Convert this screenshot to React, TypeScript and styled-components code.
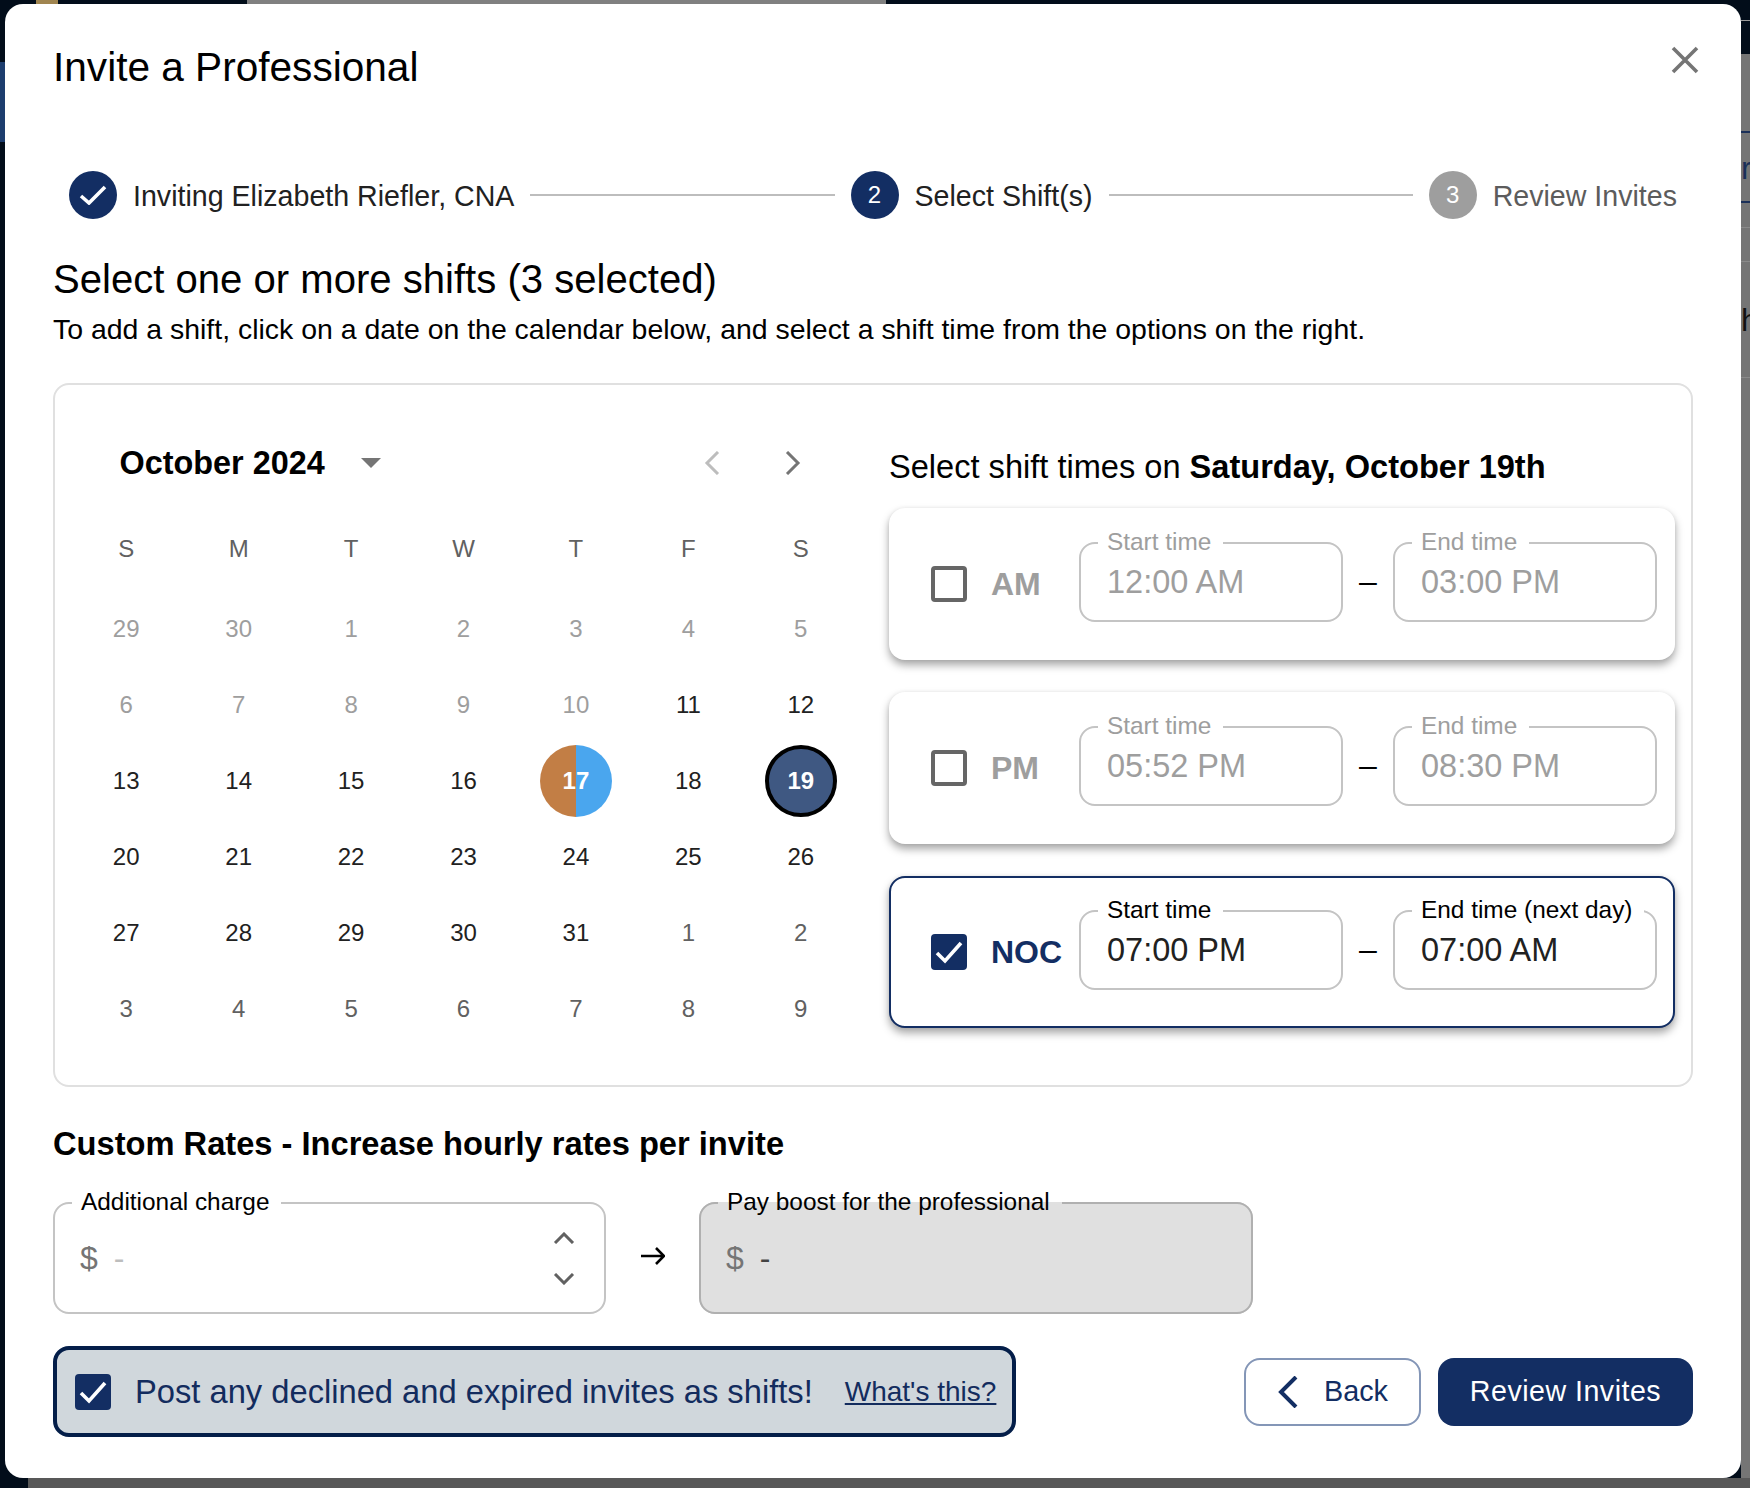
import React from "react";
import styled, { createGlobalStyle } from "styled-components";

const NAVY = "#132e63";

const Global = createGlobalStyle`
  html, body { margin: 0; padding: 0; background: #020d1a; overflow: hidden; }
  * { box-sizing: border-box; }
  body { font-family: "Liberation Sans", Arial, sans-serif; color: #000; }
`;

const stripe = (c: string) => `linear-gradient(${c}, ${c})`;

const Backdrop = styled.div`
  position: relative;
  width: 1750px;
  height: 1488px;
  padding: 4px 9px 10px 5px;
  background-color: #020d1a;
  background-repeat: no-repeat;
  background-image:
    ${stripe("#808080")}, ${stripe("#a08550")}, ${stripe("#1d3d6e")}, ${stripe("#585858")},
    ${stripe("#1a2f58")}, ${stripe("#1a2f58")},
    ${stripe("#8a8a8a")}, ${stripe("#8a8a8a")}, ${stripe("#8a8a8a")},
    ${stripe("#757575")}, ${stripe("#9a9a9a")};
  background-size:
    639px 4px, 22px 4px, 5px 80px, 1722px 10px,
    9px 2px, 9px 2px,
    9px 1px, 9px 1px, 9px 1px,
    9px 1434px, 9px 1px;
  background-position:
    247px 0, 36px 0, 0 62px, 28px 1478px,
    1741px 131px, 1741px 201px,
    1741px 227px, 1741px 261px, 1741px 377px,
    1741px 54px, 1741px 20px;
`;

const BehindGlyph = styled.span<{ $top: number; $c: string }>`
  position: absolute;
  left: 1741px;
  top: ${(p) => p.$top}px;
  width: 9px;
  overflow: hidden;
  font-size: 32px;
  line-height: 36px;
  color: ${(p) => p.$c};
`;

const Modal = styled.div`
  position: relative;
  width: 1736px;
  height: 1474px;
  background: #fff;
  border-radius: 18px;
  padding: 0 48px;
  display: flex;
  flex-direction: column;
`;

const Header = styled.div`
  height: 167px;
  padding-top: 36px;
  display: flex;
  justify-content: space-between;
  align-items: flex-start;
`;

const Title = styled.h1`
  margin: 0;
  font-size: 40.6px;
  font-weight: 400;
  line-height: 54px;
  color: #000;
`;

const CloseButton = styled.button`
  border: 0;
  background: none;
  padding: 0;
  margin: 6px -6px 0 0;
  width: 28px;
  height: 28px;
  display: flex;
`;

const Stepper = styled.div`
  height: 48px;
  padding: 0 16px 0 16px;
  display: flex;
  align-items: center;
  gap: 16px;
`;

const Circle = styled.span<{ $on: boolean }>`
  width: 48px;
  height: 48px;
  flex: none;
  border-radius: 50%;
  display: flex;
  align-items: center;
  justify-content: center;
  color: #fff;
  font-size: 24px;
  background: ${(p) => (p.$on ? NAVY : "#9e9e9e")};
`;

const StepText = styled.span<{ $on: boolean }>`
  font-size: 28.6px;
  line-height: 50px;
  white-space: nowrap;
  padding-top: 1px;
  color: ${(p) => (p.$on ? "#212121" : "#5c5c5c")};
`;

const StepLine = styled.span`
  flex: 1;
  height: 2px;
  background: #bdbdbd;
`;

const Heading = styled.h2`
  margin: 36px 0 0;
  font-size: 40.1px;
  font-weight: 400;
  line-height: 48px;
  color: #000;
`;

const Lead = styled.p`
  margin: 9px 0 0;
  font-size: 28.45px;
  line-height: 34px;
  color: #000;
`;

const Panel = styled.section`
  margin-top: 37px;
  height: 704px;
  border: 2px solid #e0e0e0;
  border-radius: 16px;
  padding: 0 16px 0 15px;
  display: flex;
  gap: 32px;
`;

const Calendar = styled.div`
  width: 787px;
  flex: none;
  padding-top: 54px;
`;

const CalHead = styled.div`
  height: 48px;
  padding-left: 49.5px;
  display: flex;
  align-items: center;
`;

const Month = styled.span`
  font-size: 32.4px;
  font-weight: 700;
  color: #000;
`;

const Caret = styled.span`
  margin-left: 36px;
  width: 0;
  height: 0;
  border-left: 10px solid transparent;
  border-right: 10px solid transparent;
  border-top: 10px solid #757575;
`;

const Navs = styled.div`
  margin-left: auto;
  margin-right: 55px;
  display: flex;
  gap: 63px;
`;

const Weekdays = styled.div`
  margin-top: 24px;
  margin-bottom: 4px;
  display: grid;
  grid-template-columns: repeat(7, 1fr);
  height: 76px;
`;

const Weekday = styled.span`
  font-size: 24px;
  color: #616161;
  display: flex;
  align-items: center;
  justify-content: center;
`;

const Days = styled.div`
  display: grid;
  grid-template-columns: repeat(7, 1fr);
  grid-auto-rows: 76px;
`;

const Day = styled.span<{ $tone?: "off" | "next" }>`
  display: flex;
  align-items: center;
  justify-content: center;
  font-size: 24px;
  color: ${(p) => (p.$tone === "off" ? "#9e9e9e" : p.$tone === "next" ? "#616161" : "#212121")};
`;

const Split = styled.span`
  width: 72px;
  height: 72px;
  border-radius: 50%;
  display: flex;
  align-items: center;
  justify-content: center;
  font-weight: 700;
  color: #fff;
  background: linear-gradient(90deg, #c27e45 50%, #4aa6ee 50%);
`;

const Chosen = styled(Split)`
  border: 4px solid #000;
  background: #3f5882;
`;

const Shifts = styled.div`
  flex: 1;
  padding-top: 62px;
`;

const ShiftsTitle = styled.h3`
  margin: 0 0 21px;
  height: 40px;
  font-size: 32.6px;
  line-height: 40px;
  font-weight: 400;
  color: #000;
  white-space: nowrap;
  & b { font-weight: 700; }
`;

const Cards = styled.div`
  display: flex;
  flex-direction: column;
  gap: 32px;
`;

const Card = styled.div<{ $on?: boolean }>`
  height: 152px;
  border-radius: 16px;
  border: 2px solid ${(p) => (p.$on ? NAVY : "transparent")};
  background: #fff;
  box-shadow: 0 5px 8px rgba(0, 0, 0, 0.35), 0 0 4px rgba(0, 0, 0, 0.06);
  padding: 18px 15px 0 40px;
  display: flex;
  align-items: flex-start;
`;

const CheckBox = styled.span<{ $on?: boolean; $top?: number }>`
  width: 36px;
  height: 36px;
  flex: none;
  margin-top: ${(p) => p.$top ?? 38}px;
  border-radius: 4px;
  border: ${(p) => (p.$on ? "none" : "4px solid #666")};
  background: ${(p) => (p.$on ? NAVY : "#fff")};
  display: flex;
`;

const ShiftName = styled.span<{ $on?: boolean }>`
  width: 88px;
  margin: 38px 0 0 24px;
  flex: none;
  font-size: 32px;
  line-height: 36px;
  font-weight: 700;
  color: ${(p) => (p.$on ? NAVY : "#9e9e9e")};
`;

const Dash = styled.span`
  width: 50px;
  flex: none;
  margin-top: 35px;
  font-size: 32px;
  line-height: 36px;
  text-align: center;
  color: #000;
`;

const Field = styled.fieldset<{ $w: number; $h: number; $fill?: boolean; $dim?: boolean }>`
  margin: 0;
  padding: 0 0 0 26px;
  min-width: 0;
  width: ${(p) => p.$w}px;
  height: ${(p) => p.$h}px;
  flex: none;
  border: 2px solid ${(p) => (p.$fill ? "#b0b0b0" : "#c4c4c4")};
  border-radius: 16px;
  background: ${(p) => (p.$fill ? "#e0e0e0" : "transparent")};
  color: ${(p) => (p.$dim ? "#9e9e9e" : "#000")};
`;

const Legend = styled.legend`
  margin-left: -9px;
  padding: 0 12px 2px 9px;
  font-size: 24.4px;
  line-height: 28px;
  white-space: nowrap;
`;

const TimeValue = styled.div<{ $dim?: boolean }>`
  font-size: 32.5px;
  line-height: 48px;
  color: ${(p) => (p.$dim ? "#9e9e9e" : "#212121")};
`;

const RatesTitle = styled.h3`
  margin: 37px 0 24px;
  height: 40px;
  font-size: 32.65px;
  line-height: 40px;
  font-weight: 700;
  color: #000;
`;

const Rates = styled.div`
  display: flex;
  align-items: flex-start;
  height: 126px;
`;

const ArrowCell = styled.span`
  width: 93px;
  flex: none;
  height: 124px;
  padding-top: 59px;
  display: flex;
  justify-content: center;
`;

const RateRow = styled.div`
  height: 80px;
  padding-right: 29px;
  display: flex;
  align-items: center;
  justify-content: space-between;
`;

const Money = styled.span`
  font-size: 32px;
  color: #757575;
  display: flex;
  gap: 16px;
  align-items: baseline;
  margin-left: -1px;
`;

const MoneyDash = styled.span<{ $dark?: boolean }>`
  color: ${(p) => (p.$dark ? "#424242" : "#bdbdbd")};
`;

const Spinner = styled.span`
  margin-top: 1px;
  display: flex;
  flex-direction: column;
  gap: 29px;
`;

const Bottom = styled.div`
  margin-top: 32px;
  display: flex;
  align-items: center;
  justify-content: space-between;
`;

const Banner = styled.label`
  width: 963px;
  height: 91px;
  border: 4px solid #041e49;
  border-radius: 16px;
  background: #d0d7dc;
  padding-left: 18px;
  display: flex;
  align-items: center;
  color: #132c5e;
`;

const BannerText = styled.span`
  margin-left: 24px;
  font-size: 32.7px;
  white-space: nowrap;
`;

const Link = styled.a`
  margin-left: 32px;
  font-size: 28px;
  color: #132c5e;
  text-decoration: underline;
  white-space: nowrap;
`;

const Actions = styled.div`
  display: flex;
  gap: 17px;
`;

const BackButton = styled.button`
  width: 177px;
  height: 68px;
  border: 2px solid #8496b7;
  border-radius: 16px;
  background: #fff;
  color: ${NAVY};
  font: 400 28.8px "Liberation Sans", Arial, sans-serif;
  display: flex;
  align-items: center;
  padding: 0 0 0 32px;
  gap: 26px;
`;

const PrimaryButton = styled.button`
  width: 255px;
  height: 68px;
  border: 0;
  border-radius: 16px;
  background: ${NAVY};
  color: #fff;
  font: 400 28.6px "Liberation Sans", Arial, sans-serif;
  letter-spacing: 0.5px;
`;

const Tick = () => (
  <svg width="36" height="36" viewBox="0 0 36 36" fill="none">
    <path d="M6 19 L14 27 L30 9" stroke="#fff" strokeWidth="3.6" />
  </svg>
);

const Chev = ({ d, c = "#757575" }: { d: string; c?: string }) => (
  <svg width="18" height="24" viewBox="0 0 18 24" fill="none">
    <path d={d} stroke={c} strokeWidth="3" />
  </svg>
);

const early = [29, 30, 1, 2, 3, 4, 5, 6, 7, 8, 9, 10];
const mid = [11, 12, 13, 14, 15, 16];
const rest = [20, 21, 22, 23, 24, 25, 26, 27, 28, 29, 30, 31];
const tail = [1, 2, 3, 4, 5, 6, 7, 8, 9];

const shifts = [
  { name: "AM", start: "12:00 AM", end: "03:00 PM", endLabel: "End time", on: false },
  { name: "PM", start: "05:52 PM", end: "08:30 PM", endLabel: "End time", on: false },
  { name: "NOC", start: "07:00 PM", end: "07:00 AM", endLabel: "End time (next day)", on: true },
];

export default function App() {
  return (
    <Backdrop>
      <Global />
      <BehindGlyph $top={150} $c="#1a2f58">r</BehindGlyph>
      <BehindGlyph $top={302} $c="#111">h</BehindGlyph>
      <Modal>
        <Header>
          <Title>Invite a Professional</Title>
          <CloseButton aria-label="Close">
            <svg width="28" height="28" viewBox="0 0 28 28" fill="none">
              <path d="M2 2 L26 26 M26 2 L2 26" stroke="#757575" strokeWidth="3.6" />
            </svg>
          </CloseButton>
        </Header>

        <Stepper>
          <Circle $on>
            <svg width="28" height="20" viewBox="0 0 28 20" fill="none">
              <path d="M2 11 L10 18 L26 2" stroke="#fff" strokeWidth="3.6" />
            </svg>
          </Circle>
          <StepText $on>Inviting Elizabeth Riefler, CNA</StepText>
          <StepLine />
          <Circle $on>2</Circle>
          <StepText $on>Select Shift(s)</StepText>
          <StepLine />
          <Circle $on={false}>3</Circle>
          <StepText $on={false}>Review Invites</StepText>
        </Stepper>

        <Heading>Select one or more shifts (3 selected)</Heading>
        <Lead>To add a shift, click on a date on the calendar below, and select a shift time from the options on the right.</Lead>

        <Panel>
          <Calendar>
            <CalHead>
              <Month>October 2024</Month>
              <Caret />
              <Navs>
                <Chev d="M15 1 L4 12 L15 23" c="#bdbdbd" />
                <Chev d="M3 1 L14 12 L3 23" />
              </Navs>
            </CalHead>
            <Weekdays>
              {["S", "M", "T", "W", "T", "F", "S"].map((d, i) => (
                <Weekday key={i}>{d}</Weekday>
              ))}
            </Weekdays>
            <Days>
              {early.map((d, i) => <Day key={`a${i}`} $tone="off">{d}</Day>)}
              {mid.map((d) => <Day key={`b${d}`}>{d}</Day>)}
              <Day><Split>17</Split></Day>
              <Day>18</Day>
              <Day><Chosen>19</Chosen></Day>
              {rest.map((d) => <Day key={`c${d}`}>{d}</Day>)}
              {tail.map((d) => <Day key={`d${d}`} $tone="next">{d}</Day>)}
            </Days>
          </Calendar>

          <Shifts>
            <ShiftsTitle>Select shift times on <b>Saturday, October 19th</b></ShiftsTitle>
            <Cards>
              {shifts.map((s) => (
                <Card key={s.name} $on={s.on}>
                  <CheckBox $on={s.on}>{s.on && <Tick />}</CheckBox>
                  <ShiftName $on={s.on}>{s.name}</ShiftName>
                  <Field $w={264} $h={94} $dim={!s.on}>
                    <Legend>Start time</Legend>
                    <TimeValue $dim={!s.on}>{s.start}</TimeValue>
                  </Field>
                  <Dash>–</Dash>
                  <Field $w={264} $h={94} $dim={!s.on}>
                    <Legend>{s.endLabel}</Legend>
                    <TimeValue $dim={!s.on}>{s.end}</TimeValue>
                  </Field>
                </Card>
              ))}
            </Cards>
          </Shifts>
        </Panel>

        <RatesTitle>Custom Rates - Increase hourly rates per invite</RatesTitle>
        <Rates>
          <Field $w={553} $h={126}>
            <Legend>Additional charge</Legend>
            <RateRow>
              <Money>$ <MoneyDash>-</MoneyDash></Money>
              <Spinner>
                <svg width="22" height="12" viewBox="0 0 22 12" fill="none">
                  <path d="M2 11 L11 2 L20 11" stroke="#616161" strokeWidth="3" />
                </svg>
                <svg width="22" height="12" viewBox="0 0 22 12" fill="none">
                  <path d="M2 1 L11 10 L20 1" stroke="#616161" strokeWidth="3" />
                </svg>
              </Spinner>
            </RateRow>
          </Field>
          <ArrowCell>
            <svg width="24" height="18" viewBox="0 0 24 18" fill="none">
              <path d="M0 9 H22 M15 1 L23 9 L15 17" stroke="#000" strokeWidth="2.6" />
            </svg>
          </ArrowCell>
          <Field $w={554} $h={126} $fill>
            <Legend>Pay boost for the professional</Legend>
            <RateRow>
              <Money>$ <MoneyDash $dark>-</MoneyDash></Money>
            </RateRow>
          </Field>
        </Rates>

        <Bottom>
          <Banner>
            <CheckBox $on $top={0}><Tick /></CheckBox>
            <BannerText>Post any declined and expired invites as shifts!</BannerText>
            <Link>What's this?</Link>
          </Banner>
          <Actions>
            <BackButton>
              <svg width="20" height="32" viewBox="0 0 20 32" fill="none">
                <path d="M18 1 L3 16 L18 31" stroke={NAVY} strokeWidth="4" />
              </svg>
              Back
            </BackButton>
            <PrimaryButton>Review Invites</PrimaryButton>
          </Actions>
        </Bottom>
      </Modal>
    </Backdrop>
  );
}
